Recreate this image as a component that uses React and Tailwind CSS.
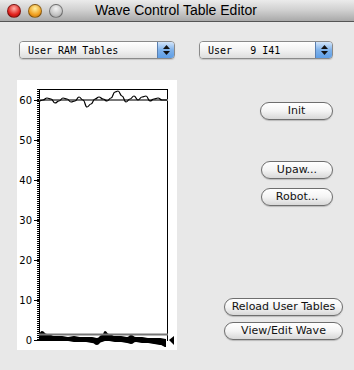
const TOP_WAVE = [
  [39, 101], [43, 100], [47, 98], [51, 99], [55, 103], [59, 101], [63, 98], [67, 99], [71, 102], [75, 101],
  [79, 97], [83, 100], [87, 107], [91, 104], [95, 99], [99, 97], [103, 99], [107, 101], [111, 98], [115, 92],
  [118, 91], [122, 96], [126, 102], [130, 99], [134, 96], [138, 100], [142, 97], [146, 96], [150, 101],
  [154, 99], [158, 98], [162, 100], [167, 100],
]

const BLOB_TOP = [
  [39, 333], [42, 331], [47, 334], [55, 336], [62, 336], [68, 337], [74, 336], [80, 337], [86, 337], [92, 337],
  [97, 338], [102, 335], [105, 331], [109, 334], [115, 336], [121, 336], [127, 337], [131, 335], [136, 337],
  [142, 337], [148, 338], [154, 338], [160, 338], [166, 339],
]

const BLOB_BOTTOM = [
  [166, 347], [160, 345], [154, 344], [148, 343], [142, 343], [136, 342], [131, 344], [127, 343], [121, 342],
  [115, 342], [109, 341], [105, 341], [102, 342], [97, 345], [92, 343], [86, 342], [80, 342], [74, 342],
  [68, 341], [62, 341], [55, 341], [48, 341], [43, 341], [39, 341],
]

const LABELS = [60, 50, 40, 30, 20, 10, 0]

function smooth(points, move = true) {
  let d = move ? `M${points[0][0]},${points[0][1]}` : ` L${points[0][0]},${points[0][1]}`
  for (let i = 1; i < points.length; i++) {
    const [x0, y0] = points[i - 1]
    const [x1, y1] = points[i]
    const mx = (x0 + x1) / 2
    d += ` C${mx},${y0} ${mx},${y1} ${x1},${y1}`
  }
  return d
}

function Chart() {
  const ticks = []
  for (let y = 89; y <= 340; y += 2) ticks.push(y)
  const blob = smooth(BLOB_TOP) + smooth(BLOB_BOTTOM, false) + ' Z'
  return (
    <div className="w-[160px] h-[270px] bg-white">
      <svg width="160" height="270" viewBox="17 80 160 270">
        {LABELS.map((v) => (
          <text key={v} x="32" y={340 - v * 4 + 3.5} textAnchor="end" fontSize="10" fontFamily="DejaVu Sans, sans-serif" fill="#000">
            {v}
          </text>
        ))}
        {ticks.map((y) => (
          <line key={y} x1="37" x2="39" y1={y + 0.5} y2={y + 0.5} stroke="#000" strokeWidth="1" />
        ))}
        {LABELS.map((v) => (
          <line key={'m' + v} x1="34" x2="39" y1={340 - v * 4 + 0.5} y2={340 - v * 4 + 0.5} stroke="#000" strokeWidth="1" />
        ))}
        <line x1="39.5" x2="39.5" y1="89" y2="341" stroke="#000" />
        <line x1="39" x2="168" y1="89.5" y2="89.5" stroke="#000" />
        <line x1="167.5" x2="167.5" y1="89" y2="341" stroke="#000" />
        <line x1="39" x2="168" y1="100" y2="100" stroke="#777" strokeWidth="2" />
        <path d={smooth(TOP_WAVE)} fill="none" stroke="#000" strokeWidth="1.2" />
        <path d={blob} fill="#000" />
        <line x1="39" x2="168" y1="334.5" y2="334.5" stroke="#777" strokeWidth="2" />
        <path d="M169,340 L174,336 L174,345 Z" fill="#000" />
      </svg>
    </div>
  )
}

function Light({ color }) {
  return <div className={`h-[14px] w-[14px] rounded-full border border-black/40 ${color}`} />
}

function Popup({ text, width }) {
  return (
    <div className={`flex h-[18px] ${width} overflow-hidden rounded-[4px] border border-[#8a8a8a] shadow-[0_1px_1px_rgba(0,0,0,0.15)]`}>
      <div className="flex flex-1 items-center bg-gradient-to-b from-white via-[#f2f2f2] to-[#dedede] pl-[8px] font-['DejaVu_Sans_Mono',monospace] text-[10px] whitespace-pre text-black">
        {text}
      </div>
      <div className="flex w-[17px] flex-col items-center justify-center gap-[2px] border-l border-[#5a7fb0] bg-gradient-to-b from-[#d4e6fa] via-[#7fb2ea] to-[#5e9ee6]">
        <svg width="7" height="4" viewBox="0 0 7 4"><path d="M3.5,0 L7,4 L0,4 Z" fill="#111" /></svg>
        <svg width="7" height="4" viewBox="0 0 7 4"><path d="M0,0 L7,0 L3.5,4 Z" fill="#111" /></svg>
      </div>
    </div>
  )
}

function Button({ label, className }) {
  return (
    <div className={`flex h-[18px] items-center justify-center rounded-full border border-[#6e6e6e] bg-gradient-to-b from-white via-[#f4f4f4] to-[#d8d8d8] font-['DejaVu_Sans',sans-serif] text-[11px] text-[#111] shadow-[0_1px_1px_rgba(0,0,0,0.2)] ${className}`}>
      {label}
    </div>
  )
}

export default function App() {
  return (
    <div className="h-[370px] w-[354px] overflow-hidden bg-[#e8e8e8]">
      <div className="flex h-[22px] items-center border-b border-[#555] bg-gradient-to-b from-[#ebebeb] via-[#cfcfcf] to-[#a9a9a9]">
        <div className="flex gap-[7px] pl-[7px]">
          <Light color="bg-[radial-gradient(circle_at_50%_30%,#ffb0a8,#e0201c_60%,#9a0c08)]" />
          <Light color="bg-[radial-gradient(circle_at_50%_30%,#fff0a0,#f0a020_60%,#b86a08)]" />
          <Light color="bg-[radial-gradient(circle_at_50%_30%,#f4f4f4,#c4c4c4_60%,#9a9a9a)]" />
        </div>
        <div className="pl-[32px] font-['Liberation_Sans',sans-serif] text-[14px] text-black">Wave Control Table Editor</div>
      </div>

      <div className="flex gap-[24px] pl-[19px] pt-[19px]">
        <Popup text="User RAM Tables" width="w-[156px]" />
        <Popup text="User   9 I41" width="w-[134px]" />
      </div>

      <div className="mt-[21px] flex pl-[17px]">
        <Chart />
        <div className="flex flex-1 flex-col items-end">
          <Button label="Init" className="mt-[22px] mr-[21px] w-[73px]" />
          <Button label="Upaw..." className="mt-[41px] mr-[21px] w-[72px]" />
          <Button label="Robot..." className="mt-[9px] mr-[21px] w-[72px]" />
          <Button label="Reload User Tables" className="mt-[92px] mr-[11px] w-[119px]" />
          <Button label="View/Edit Wave" className="mt-[6px] mr-[11px] w-[119px]" />
        </div>
      </div>
    </div>
  )
}
